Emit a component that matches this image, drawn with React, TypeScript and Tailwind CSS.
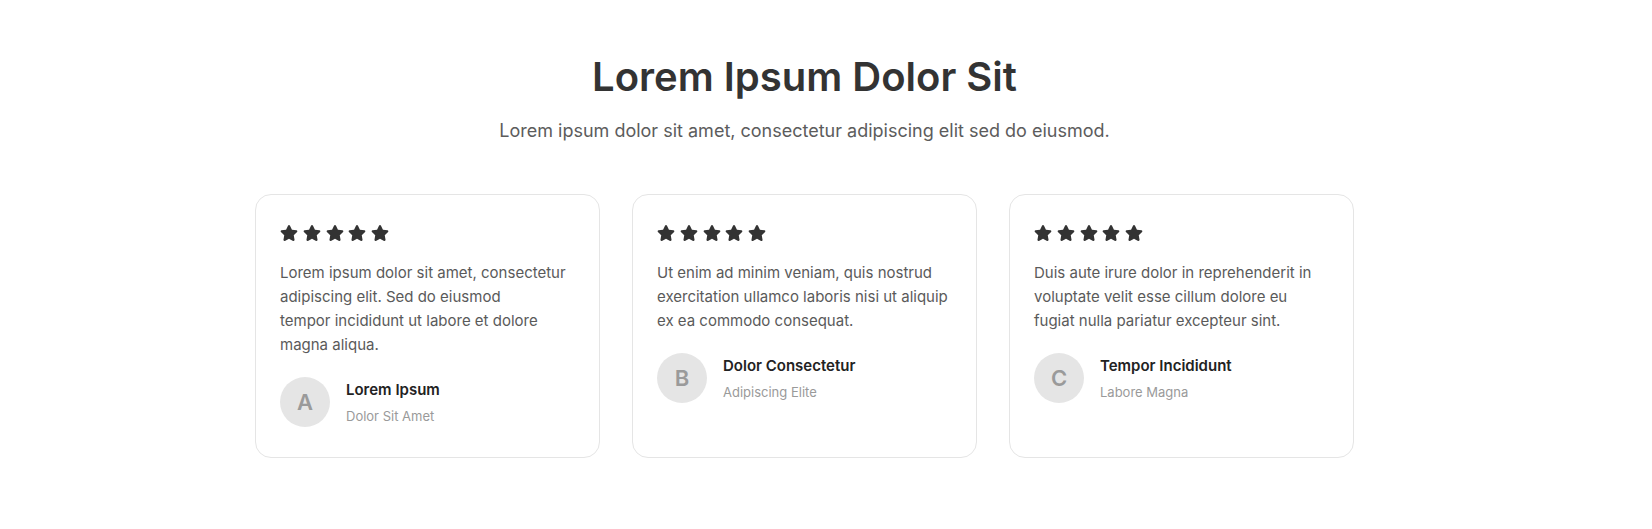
import * as React from 'react';
import { FaStar } from 'react-icons/fa';

type Testimonial = {
	quote: React.ReactNode;
	name: string;
	role: string;
	initial: string;
};

const testimonials: Testimonial[] = [
	{
		quote: (
			<>
				Lorem ipsum dolor sit amet, consectetur adipiscing elit. Sed do eiusmod
				<br />
				tempor incididunt ut labore et dolore magna aliqua.
			</>
		),
		name: 'Lorem Ipsum',
		role: 'Dolor Sit Amet',
		initial: 'A',
	},
	{
		quote:
			'Ut enim ad minim veniam, quis nostrud exercitation ullamco laboris nisi ut aliquip ex ea commodo consequat.',
		name: 'Dolor Consectetur',
		role: 'Adipiscing Elite',
		initial: 'B',
	},
	{
		quote:
			'Duis aute irure dolor in reprehenderit in voluptate velit esse cillum dolore eu fugiat nulla pariatur excepteur sint.',
		name: 'Tempor Incididunt',
		role: 'Labore Magna',
		initial: 'C',
	},
];

const Stars: React.FC = () => {
	return (
		<div className="mt-px flex h-[18px] items-center gap-[4.8px] text-[#333333]">
			{[0, 1, 2, 3, 4].map(i => (
				<FaStar key={i} size={18} />
			))}
		</div>
	);
};

const TestimonialCard: React.FC<Testimonial> = ({ quote, name, role, initial }) => {
	return (
		<article className="flex flex-col rounded-2xl border border-[#e5e5e5] bg-white px-6 pt-7 pb-[30px]">
			<Stars />
			<p className="mt-[19px] text-[15px] leading-6 text-[#5a5a5a]">{quote}</p>
			<div className="mt-5 flex items-center gap-4">
				<div className="flex h-[50px] w-[50px] shrink-0 items-center justify-center rounded-full bg-[#e5e5e5] text-[22px] font-semibold text-[#9a9a9a]">
					{initial}
				</div>
				<div className="min-w-0">
					<h3 className="text-[15px] font-semibold leading-[22px] text-[#222222]">
						{name}
					</h3>
					<p className="mt-[5px] text-[13px] leading-5 text-[#9a9a9a]">{role}</p>
				</div>
			</div>
		</article>
	);
};

export default function App() {
	return (
		<div
			className="min-h-screen w-full bg-white pt-[53px] pb-16 pr-[43px]"
			style={{ fontFamily: 'Inter, "Noto Sans", sans-serif' }}
		>
			<section className="mx-auto w-[1099px]">
				<header className="text-center">
					<h2 className="text-[40px] font-semibold leading-[48px] text-[#333333]">
						Lorem Ipsum Dolor Sit
					</h2>
					<p className="mt-4 text-[18px] leading-7 text-[#5c5c5c]">
						Lorem ipsum dolor sit amet, consectetur adipiscing elit sed do eiusmod.
					</p>
				</header>

				<div className="mt-[49px] grid grid-cols-3 items-stretch gap-8">
					{testimonials.map(t => (
						<TestimonialCard key={t.name} {...t} />
					))}
				</div>
			</section>
		</div>
	);
}
